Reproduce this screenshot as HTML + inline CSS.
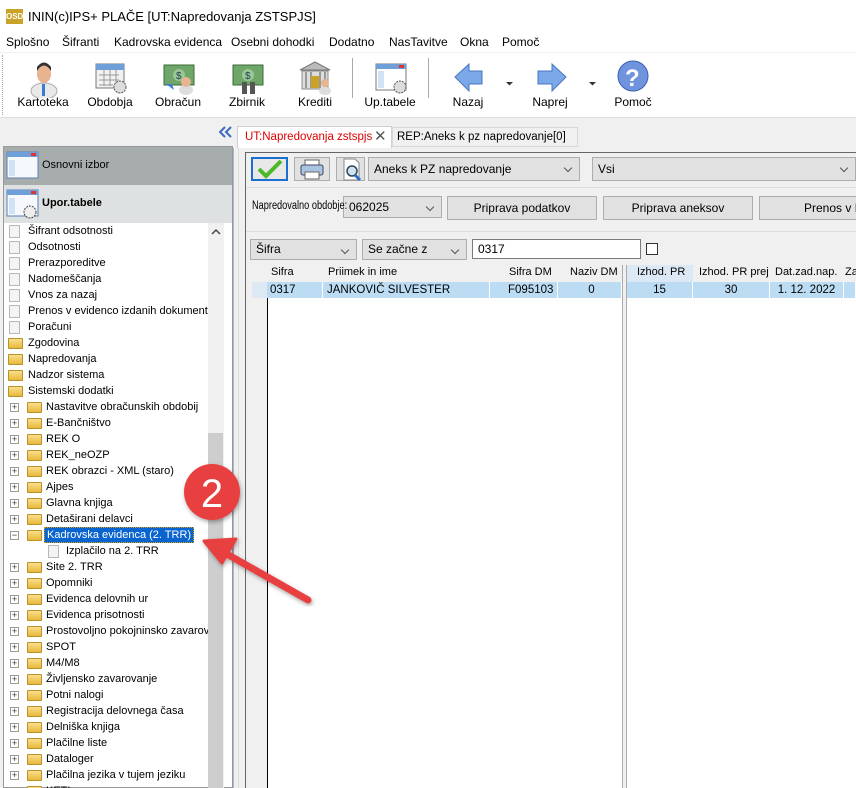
<!DOCTYPE html>
<html><head><meta charset="utf-8">
<style>
*{margin:0;padding:0;box-sizing:border-box}
body{width:856px;height:788px;overflow:hidden;background:#f0f0f0;font-family:"Liberation Sans",Arial,sans-serif;font-size:12px;color:#000;position:relative}
.a{position:absolute}
.t{position:absolute;white-space:nowrap}
.lbl{position:absolute;font-size:12px;text-align:center;width:80px;white-space:nowrap}
.row{position:absolute;left:0;height:16px;line-height:16px;font-size:11px;white-space:nowrap}
.pg{position:absolute;width:11px;height:13px;background:#f4f4f4;border:1px solid #b8b8b8}
.fd{position:absolute;width:15px;height:11px;background:linear-gradient(#f9e08a,#e8b83c);border:1px solid #b8912a;border-radius:1px}
.pl{position:absolute;width:9px;height:9px;border:1px solid #9a9a9a;background:#fff;font-size:9px;line-height:7px;text-align:center;color:#333}
.cb{position:absolute;background:#e1e1e1;border:1px solid #adadad;height:26px;line-height:24px;padding-left:5px;font-size:12px}
.cb:after{content:"";position:absolute;right:8px;top:7px;width:5px;height:5px;border-right:1px solid #555;border-bottom:1px solid #555;transform:rotate(45deg)}
.btn{position:absolute;background:#e1e1e1;border:1px solid #adadad;height:26px;line-height:24px;text-align:center;font-size:12px}
.hd{position:absolute;top:266px;font-size:11px;white-space:nowrap}
.cell{position:absolute;top:282px;height:16px;line-height:16px;background:#bcdcf4;font-size:11.5px;white-space:nowrap;border-right:1px solid #fff}
</style></head><body>
<div class="a" style="left:0;top:0;width:856px;height:32px;background:#fff"></div>
<div class="a" style="top:9px;left:6px;width:17px;height:15px;background:#c9a227;color:#fff;font-size:8px;font-weight:bold;line-height:15px;text-align:center">OSD</div>
<div class="t" style="left:28px;top:9px;font-size:13px">ININ(c)IPS+ PLAČE [UT:Napredovanja ZSTSPJS]</div>
<div class="a" style="left:0;top:32px;width:856px;height:20px;background:#fff"></div>
<div class="t" style="left:6px;top:35px">Splošno</div>
<div class="t" style="left:62px;top:35px">Šifranti</div>
<div class="t" style="left:114px;top:35px">Kadrovska evidenca</div>
<div class="t" style="left:231px;top:35px">Osebni dohodki</div>
<div class="t" style="left:329px;top:35px">Dodatno</div>
<div class="t" style="left:389px;top:35px">NasTavitve</div>
<div class="t" style="left:460px;top:35px">Okna</div>
<div class="t" style="left:502px;top:35px">Pomoč</div>
<div class="a" style="left:0;top:52px;width:856px;height:66px;background:#fff;border-top:1px solid #f0f0f0;border-bottom:1px solid #dcdcdc"></div>
<div class="a" style="left:2px;top:55px;height:60px;border-left:1px dotted #aaa"></div>
<svg class="a" style="left:0;top:58px" width="700" height="40">
 <ellipse cx="44" cy="33" rx="13" ry="8" fill="#e9e9e9" stroke="#aaa"/>
 <rect x="42" y="26" width="3" height="12" fill="#3a7bd5"/>
 <ellipse cx="44" cy="16" rx="7" ry="9" fill="#e8b490"/>
 <path d="M37 13 Q44 2 51 13 L51 9 Q44 0 37 9Z" fill="#333"/>
 <rect x="96" y="6" width="28" height="24" fill="#f2f2f2" stroke="#777"/>
 <rect x="96" y="6" width="28" height="6" fill="#6f9fd8"/>
 <path d="M99 17h20M99 22h20M99 27h14M104 12v16M110 12v16M116 12v16" stroke="#999"/>
 <circle cx="120" cy="29" r="6" fill="#ddd" stroke="#555" stroke-dasharray="2 1"/>
 <rect x="164" y="7" width="30" height="20" fill="#6fa66a" stroke="#3d6b3a"/>
 <circle cx="179" cy="17" r="6" fill="#9cc796"/><text x="176" y="21" font-size="10" fill="#245">$</text>
 <ellipse cx="186" cy="32" rx="7" ry="5" fill="#ddd"/><circle cx="186" cy="24" r="5" fill="#e8b490"/>
 <path d="M166 26 l8 6 l-2 -6" fill="#3a7bd5"/>
 <rect x="233" y="7" width="30" height="20" fill="#6fa66a" stroke="#3d6b3a"/>
 <circle cx="248" cy="17" r="6" fill="#9cc796"/><text x="245" y="21" font-size="10" fill="#245">$</text>
 <rect x="242" y="24" width="5" height="12" fill="#555"/><rect x="250" y="24" width="5" height="12" fill="#555"/>
 <path d="M300 12 L315 4 L330 12Z" fill="#bbb" stroke="#777"/>
 <rect x="302" y="13" width="26" height="18" fill="#ddd" stroke="#888"/>
 <path d="M306 14v16M311 14v16M320 14v16M325 14v16" stroke="#999" stroke-width="2"/>
 <rect x="311" y="18" width="8" height="12" fill="#c9a227"/>
 <ellipse cx="325" cy="33" rx="6" ry="4" fill="#ddd"/><circle cx="325" cy="25" r="4" fill="#e8b490"/>
 <line x1="352.5" y1="-3" x2="352.5" y2="55" stroke="#aaa"/>
 <rect x="376" y="6" width="30" height="26" fill="#fff" stroke="#777"/>
 <rect x="376" y="6" width="30" height="5" fill="#6f9fd8"/><rect x="399" y="7" width="5" height="3" fill="#d33"/>
 <rect x="378" y="13" width="6" height="17" fill="#cfe3f5"/>
 <circle cx="400" cy="29" r="6" fill="#ddd" stroke="#555" stroke-dasharray="2 1"/>
 <line x1="428.5" y1="-3" x2="428.5" y2="55" stroke="#aaa"/>
 <path d="M455 19 L469 6 L469 13 L482 13 L482 26 L469 26 L469 33Z" fill="#7aa8e8" stroke="#4a76c0"/>
 <path d="M506 24h7l-3.5 3.5z" fill="#333"/>
 <path d="M566 19 L552 6 L552 13 L538 13 L538 26 L552 26 L552 33Z" fill="#7aa8e8" stroke="#4a76c0"/>
 <path d="M589 24h7l-3.5 3.5z" fill="#333"/>
 <circle cx="633" cy="18" r="15" fill="#6f93dc" stroke="#3d5fb0"/>
 <text x="625" y="28" font-size="24" font-weight="bold" fill="#fff" font-family="Liberation Sans">?</text>
</svg>
<div class="lbl" style="left:3px;top:95px">Kartoteka</div>
<div class="lbl" style="left:70px;top:95px">Obdobja</div>
<div class="lbl" style="left:138px;top:95px">Obračun</div>
<div class="lbl" style="left:207px;top:95px">Zbirnik</div>
<div class="lbl" style="left:275px;top:95px">Krediti</div>
<div class="lbl" style="left:350px;top:95px">Up.tabele</div>
<div class="lbl" style="left:428px;top:95px">Nazaj</div>
<div class="lbl" style="left:510px;top:95px">Naprej</div>
<div class="lbl" style="left:593px;top:95px">Pomoč</div>

<svg class="a" style="left:219px;top:126px" width="14" height="12"><path d="M6 1L1 6L6 11M12 1L7 6L12 11" stroke="#3b6bc0" stroke-width="2" fill="none"/></svg>
<div class="a" style="left:3px;top:146px;width:230px;height:642px;background:#fff;border:1px solid #999"></div>
<div class="a" style="left:4px;top:147px;width:228px;height:38px;background:#a7adad"></div>
<div class="a" style="left:4px;top:185px;width:228px;height:38px;background:#dde1e1"></div>
<svg class="a" style="left:6px;top:151px" width="34" height="70">
 <rect x="1" y="1" width="31" height="26" fill="#f5f8fc" stroke="#5c7fb2"/><rect x="1" y="1" width="31" height="5" fill="#6f9fd8"/><rect x="25" y="2" width="5" height="3" fill="#d33"/><rect x="3" y="9" width="6" height="16" fill="#cfe3f5"/>
 <rect x="1" y="39" width="31" height="26" fill="#f5f8fc" stroke="#5c7fb2"/><rect x="1" y="39" width="31" height="5" fill="#6f9fd8"/><rect x="25" y="40" width="5" height="3" fill="#d33"/><rect x="3" y="47" width="6" height="16" fill="#cfe3f5"/>
 <circle cx="24" cy="61" r="6" fill="#eee" stroke="#444" stroke-dasharray="2 1"/>
</svg>
<div class="t" style="left:42px;top:159px;font-size:11px">Osnovni izbor</div>
<div class="t" style="left:42px;top:197px;font-size:11px;font-weight:bold">Upor.tabele</div>
<div class="a" style="left:208px;top:223px;width:16px;height:565px;background:#f0f0f0"></div>
<div class="a" style="left:208px;top:433px;width:15px;height:355px;background:#cdcdcd"></div>
<svg class="a" style="left:211px;top:228px" width="10" height="8"><path d="M1 6L5 2L9 6" stroke="#444" stroke-width="1.5" fill="none"/></svg>
<div class="a" style="left:4px;top:223px;width:204px;height:565px;overflow:hidden">
 <div style="position:relative">
  <div class="pg" style="left:5px;top:2px"></div><div class="row" style="left:24px;top:0">Šifrant odsotnosti</div>
  <div class="pg" style="left:5px;top:18px"></div><div class="row" style="left:24px;top:16px">Odsotnosti</div>
  <div class="pg" style="left:5px;top:34px"></div><div class="row" style="left:24px;top:32px">Prerazporeditve</div>
  <div class="pg" style="left:5px;top:50px"></div><div class="row" style="left:24px;top:48px">Nadomeščanja</div>
  <div class="pg" style="left:5px;top:66px"></div><div class="row" style="left:24px;top:64px">Vnos za nazaj</div>
  <div class="pg" style="left:5px;top:82px"></div><div class="row" style="left:24px;top:80px">Prenos v evidenco izdanih dokumentov</div>
  <div class="pg" style="left:5px;top:98px"></div><div class="row" style="left:24px;top:96px">Poračuni</div>
  <div class="fd" style="left:4px;top:115px"></div><div class="row" style="left:24px;top:112px">Zgodovina</div>
  <div class="fd" style="left:4px;top:131px"></div><div class="row" style="left:24px;top:128px">Napredovanja</div>
  <div class="fd" style="left:4px;top:147px"></div><div class="row" style="left:24px;top:144px">Nadzor sistema</div>
  <div class="fd" style="left:4px;top:163px"></div><div class="row" style="left:24px;top:160px">Sistemski dodatki</div>
 </div>
</div>
<div class="a" style="left:4px;top:399px;width:204px;height:389px;overflow:hidden">
<div style="position:relative;font-size:0">
 <div class="pl" style="left:6px;top:4px">+</div><div class="fd" style="left:23px;top:3px"></div><div class="row" style="left:42px;top:0">Nastavitve obračunskih obdobij</div>
 <div class="pl" style="left:6px;top:20px">+</div><div class="fd" style="left:23px;top:19px"></div><div class="row" style="left:42px;top:16px">E-Bančništvo</div>
 <div class="pl" style="left:6px;top:36px">+</div><div class="fd" style="left:23px;top:35px"></div><div class="row" style="left:42px;top:32px">REK O</div>
 <div class="pl" style="left:6px;top:52px">+</div><div class="fd" style="left:23px;top:51px"></div><div class="row" style="left:42px;top:48px">REK_neOZP</div>
 <div class="pl" style="left:6px;top:68px">+</div><div class="fd" style="left:23px;top:67px"></div><div class="row" style="left:42px;top:64px">REK obrazci - XML (staro)</div>
 <div class="pl" style="left:6px;top:84px">+</div><div class="fd" style="left:23px;top:83px"></div><div class="row" style="left:42px;top:80px">Ajpes</div>
 <div class="pl" style="left:6px;top:100px">+</div><div class="fd" style="left:23px;top:99px"></div><div class="row" style="left:42px;top:96px">Glavna knjiga</div>
 <div class="pl" style="left:6px;top:116px">+</div><div class="fd" style="left:23px;top:115px"></div><div class="row" style="left:42px;top:112px">Detaširani delavci</div>
 <div class="pl" style="left:6px;top:132px">−</div><div class="fd" style="left:23px;top:131px"></div><div class="row" style="left:40px;top:128px;background:#0a64d0;color:#fff;padding:0 2px;border:1px dotted #e0a000;line-height:14px">Kadrovska evidenca (2. TRR)</div>
 <div class="pg" style="left:44px;top:146px"></div><div class="row" style="left:62px;top:144px">Izplačilo na 2. TRR</div>
 <div class="pl" style="left:6px;top:164px">+</div><div class="fd" style="left:23px;top:163px"></div><div class="row" style="left:42px;top:160px">Site 2. TRR</div>
 <div class="pl" style="left:6px;top:180px">+</div><div class="fd" style="left:23px;top:179px"></div><div class="row" style="left:42px;top:176px">Opomniki</div>
 <div class="pl" style="left:6px;top:196px">+</div><div class="fd" style="left:23px;top:195px"></div><div class="row" style="left:42px;top:192px">Evidenca delovnih ur</div>
 <div class="pl" style="left:6px;top:212px">+</div><div class="fd" style="left:23px;top:211px"></div><div class="row" style="left:42px;top:208px">Evidenca prisotnosti</div>
 <div class="pl" style="left:6px;top:228px">+</div><div class="fd" style="left:23px;top:227px"></div><div class="row" style="left:42px;top:224px">Prostovoljno pokojninsko zavarovanje</div>
 <div class="pl" style="left:6px;top:244px">+</div><div class="fd" style="left:23px;top:243px"></div><div class="row" style="left:42px;top:240px">SPOT</div>
 <div class="pl" style="left:6px;top:260px">+</div><div class="fd" style="left:23px;top:259px"></div><div class="row" style="left:42px;top:256px">M4/M8</div>
 <div class="pl" style="left:6px;top:276px">+</div><div class="fd" style="left:23px;top:275px"></div><div class="row" style="left:42px;top:272px">Življensko zavarovanje</div>
 <div class="pl" style="left:6px;top:292px">+</div><div class="fd" style="left:23px;top:291px"></div><div class="row" style="left:42px;top:288px">Potni nalogi</div>
 <div class="pl" style="left:6px;top:308px">+</div><div class="fd" style="left:23px;top:307px"></div><div class="row" style="left:42px;top:304px">Registracija delovnega časa</div>
 <div class="pl" style="left:6px;top:324px">+</div><div class="fd" style="left:23px;top:323px"></div><div class="row" style="left:42px;top:320px">Delniška knjiga</div>
 <div class="pl" style="left:6px;top:340px">+</div><div class="fd" style="left:23px;top:339px"></div><div class="row" style="left:42px;top:336px">Plačilne liste</div>
 <div class="pl" style="left:6px;top:356px">+</div><div class="fd" style="left:23px;top:355px"></div><div class="row" style="left:42px;top:352px">Dataloger</div>
 <div class="pl" style="left:6px;top:372px">+</div><div class="fd" style="left:23px;top:371px"></div><div class="row" style="left:42px;top:368px">Plačilna jezika v tujem jeziku</div>
 <div class="pl" style="left:6px;top:388px">+</div><div class="fd" style="left:23px;top:387px"></div><div class="row" style="left:42px;top:384px">KETI</div>
</div></div>

<div class="a" style="left:237px;top:126px;width:155px;height:22px;background:#fff;border:1px solid #d0d0d0;border-bottom:none"></div>
<div class="t" style="left:245px;top:131px;color:#d00;font-size:11.5px">UT:Napredovanja zstspjs</div>
<div class="t" style="left:374px;top:127px;font-size:15px;color:#555">✕</div>
<div class="a" style="left:392px;top:127px;width:186px;height:20px;background:#f0f0f0;border:1px solid #d8d8d8"></div>
<div class="t" style="left:397px;top:131px;font-size:11.5px">REP:Aneks k pz napredovanje[0]</div>
<div class="a" style="left:233px;top:148px;width:1px;height:640px;background:#a8b8cc"></div>
<div class="a" style="left:238px;top:148px;width:1px;height:640px;background:#ddd"></div>
<div class="a" style="left:245px;top:152px;width:611px;height:636px;border-left:1px solid #666;border-top:1px solid #666;background:#f0f0f0"></div>
<div class="a" style="left:251px;top:157px;width:37px;height:24px;border:2px solid #1a6fd0;background:#e8e8e8"></div>
<svg class="a" style="left:255px;top:158px" width="30" height="22"><path d="M4 11 L11 18 L26 3" stroke="#4fb82a" stroke-width="4" fill="none"/></svg>
<div class="a" style="left:294px;top:157px;width:36px;height:24px;background:#e1e1e1;border:1px solid #adadad"></div>
<svg class="a" style="left:300px;top:159px" width="26" height="22"><rect x="5" y="1" width="14" height="6" fill="#fff" stroke="#666"/><rect x="1" y="6" width="22" height="10" rx="2" fill="#a9c4e0" stroke="#446"/><rect x="5" y="13" width="14" height="7" fill="#fff" stroke="#666"/></svg>
<div class="a" style="left:336px;top:157px;width:29px;height:24px;background:#e1e1e1;border:1px solid #adadad"></div>
<svg class="a" style="left:340px;top:158px" width="24" height="24"><path d="M4 1h11l4 4v17H4z" fill="#fff" stroke="#888"/><circle cx="12" cy="13" r="5" fill="#cfe3f5" stroke="#345" stroke-width="1.5"/><path d="M15 17l5 5" stroke="#2a6fd0" stroke-width="3"/></svg>
<div class="cb" style="left:368px;top:157px;width:212px;height:24px;line-height:22px">Aneks k PZ napredovanje</div>
<div class="cb" style="left:592px;top:157px;width:264px;height:24px;line-height:22px">Vsi</div>
<div class="a" style="left:246px;top:187px;width:610px;height:1px;background:#ddd"></div>
<div class="cb" style="left:343px;top:196px;width:99px;height:22px;line-height:20px">062025</div>
<div class="t" style="left:252px;top:200px;font-size:11.5px;transform:scaleX(0.8);transform-origin:0 0">Napredovalno obdobje:</div>
<div class="btn" style="left:447px;top:196px;width:150px;height:24px;line-height:22px">Priprava podatkov</div>
<div class="btn" style="left:603px;top:196px;width:150px;height:24px;line-height:22px">Priprava aneksov</div>
<div class="btn" style="left:759px;top:196px;width:120px;height:24px;line-height:22px;text-align:left;padding-left:44px">Prenos v K</div>
<div class="a" style="left:246px;top:231px;width:610px;height:1px;background:#ddd"></div>
<div class="cb" style="left:250px;top:239px;width:107px;height:21px;line-height:19px">Šifra</div>
<div class="cb" style="left:362px;top:239px;width:105px;height:21px;line-height:19px">Se začne z</div>
<div class="a" style="left:472px;top:239px;width:169px;height:20px;background:#fff;border:1px solid #7a7a7a;padding-left:5px;line-height:18px">0317</div>
<div class="a" style="left:646px;top:243px;width:12px;height:12px;background:#fff;border:1px solid #333"></div>
<div class="a" style="left:251px;top:265px;width:605px;height:523px;background:#fff"></div>
<div class="a" style="left:251px;top:265px;width:605px;height:17px;background:#f0f0f0"></div>
<div class="a" style="left:251px;top:265px;width:16px;height:523px;background:#f0f0f0"></div>
<div class="a" style="left:252px;top:282px;width:15px;height:16px;background:#dce9f5"></div>
<div class="a" style="left:267px;top:298px;width:1px;height:490px;background:#000"></div>
<div class="a" style="left:622px;top:265px;width:5px;height:523px;background:#f0f0f0;border-left:1px solid #aaa;border-right:1px solid #aaa"></div>
<div class="a" style="left:627px;top:265px;width:66px;height:17px;background:#dce9f5"></div>
<div class="hd" style="left:271px">Sifra</div>
<div class="hd" style="left:328px">Priimek in ime</div>
<div class="hd" style="left:509px">Sifra DM</div>
<div class="hd" style="left:570px">Naziv DM</div>
<div class="hd" style="left:637px">Izhod. PR</div>
<div class="hd" style="left:699px">Izhod. PR prej</div>
<div class="hd" style="left:775px">Dat.zad.nap.</div>
<div class="hd" style="left:845px">Za</div>
<div class="cell" style="left:267px;width:56px;padding-left:3px">0317</div>
<div class="cell" style="left:323px;width:167px;padding-left:4px">JANKOVIČ SILVESTER</div>
<div class="cell" style="left:490px;padding-left:18px;width:68px">F095103</div>
<div class="cell" style="left:558px;width:64px;text-align:center;padding-left:4px">0</div>
<div class="cell" style="left:627px;width:66px;text-align:center">15</div>
<div class="cell" style="left:693px;width:77px;text-align:center">30</div>
<div class="cell" style="left:770px;width:74px;text-align:center">1. 12. 2022</div>
<div class="cell" style="left:844px;width:12px"></div>

<svg class="a" style="left:0;top:0" width="856" height="788">
 <defs><filter id="sh"><feDropShadow dx="1" dy="2" stdDeviation="2" flood-opacity="0.35"/></filter></defs>
 <circle cx="212" cy="492" r="28" fill="#e8413f" filter="url(#sh)"/>
 <text x="212" y="507" text-anchor="middle" font-size="40" fill="#fff" font-family="Liberation Sans">2</text>
 <g filter="url(#sh)">
  <line x1="308" y1="600" x2="225" y2="553" stroke="#e8413f" stroke-width="7" stroke-linecap="round"/>
  <path d="M204 541 L236 539 L222 563Z" fill="#e8413f" stroke="#e8413f" stroke-width="3" stroke-linejoin="round"/>
 </g>
</svg>
</body></html>
